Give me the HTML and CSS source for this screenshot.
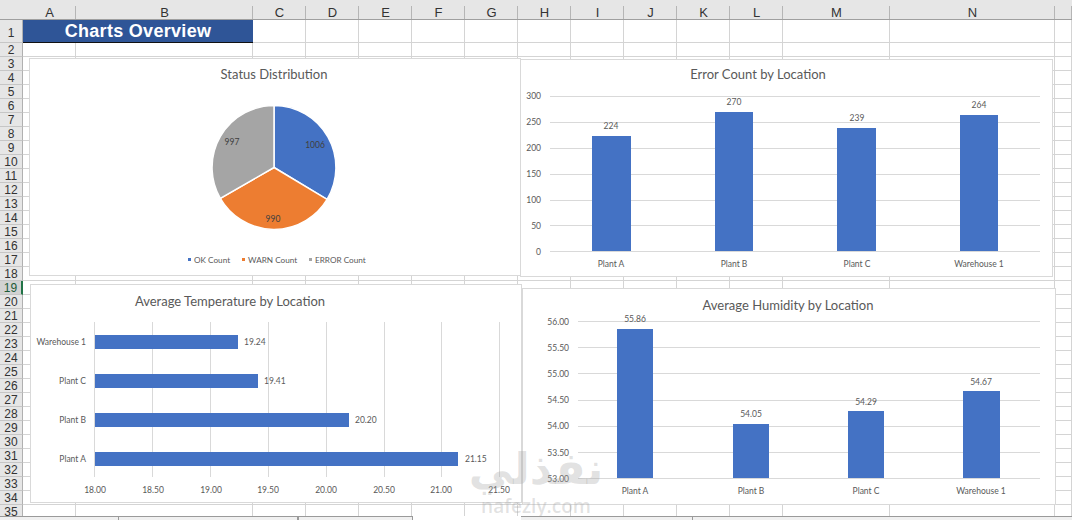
FILE: index.html
```html
<!DOCTYPE html>
<html lang="en">
<head>
    <meta charset="UTF-8">
    <title>Charts Overview</title>
    <link rel="stylesheet" href="styles.css">
</head>
<body>
    <div class="sheet-wrap">
        <div class="sheet" id="sheet"></div>

        <!-- Status Distribution -->
        <div class="chart chart-status">
            <svg viewBox="30 59 490 216" width="490" height="216">
                <text class="title" x="274" y="79">Status Distribution</text>
                <path class="s-blue" d="M274 167.5 V105.5 A62 62 0 0 1 327.1 199.4 Z"/>
                <path class="s-orange" d="M274 167.5 L327.1 199.4 A62 62 0 0 1 220.3 198.4 Z"/>
                <path class="s-grey" d="M274 167.5 L220.3 198.4 A62 62 0 0 1 274 105.5 Z"/>
                <text class="lbl dark" x="315" y="148">1006</text>
                <text class="lbl dark" x="273" y="222">990</text>
                <text class="lbl dark" x="232" y="145">997</text>
                <rect x="188" y="258" width="3" height="3" fill="#4472c4"/>
                <text class="legend" x="194" y="263">OK Count</text>
                <rect x="242" y="258" width="3" height="3" fill="#ed7d31"/>
                <text class="legend" x="248" y="263">WARN Count</text>
                <rect x="309" y="258" width="3" height="3" fill="#a5a5a5"/>
                <text class="legend" x="315" y="263">ERROR Count</text>
            </svg>
        </div>

        <!-- Error Count by Location -->
        <div class="chart chart-errors">
            <svg viewBox="521 60 531 216" width="531" height="216">
                <text class="title" x="758" y="79">Error Count by Location</text>
                <g class="grid">
                    <path d="M550 96.5H1040M550 122.5H1040M550 148.5H1040M550 174.5H1040M550 200.5H1040M550 225.5H1040M550 251.5H1040"/>
                </g>
                <text class="lbl end" x="541" y="99">300</text>
                <text class="lbl end" x="541" y="125">250</text>
                <text class="lbl end" x="541" y="151">200</text>
                <text class="lbl end" x="541" y="177">150</text>
                <text class="lbl end" x="541" y="203">100</text>
                <text class="lbl end" x="541" y="229">50</text>
                <text class="lbl end" x="541" y="255">0</text>
                <rect class="bar" x="592" y="136" width="39" height="115"/>
                <rect class="bar" x="715" y="112" width="38" height="139"/>
                <rect class="bar" x="837" y="128" width="39" height="123"/>
                <rect class="bar" x="960" y="115" width="38" height="136"/>
                <text class="lbl" x="611" y="129">224</text>
                <text class="lbl" x="734" y="105">270</text>
                <text class="lbl" x="857" y="121">239</text>
                <text class="lbl" x="979" y="108">264</text>
                <text class="lbl" x="611" y="267">Plant A</text>
                <text class="lbl" x="734" y="267">Plant B</text>
                <text class="lbl" x="857" y="267">Plant C</text>
                <text class="lbl" x="979" y="267">Warehouse 1</text>
            </svg>
        </div>

        <!-- Average Temperature by Location -->
        <div class="chart chart-temp">
            <svg viewBox="31 285 490 217" width="490" height="217">
                <text class="title" x="230" y="306">Average Temperature by Location</text>
                <g class="grid">
                    <path d="M94.5 322V477M152.5 322V477M210.5 322V477M268.5 322V477M326.5 322V477M384.5 322V477M441.5 322V477M499.5 322V477"/>
                </g>
                <rect class="bar" x="95" y="335" width="143" height="14"/>
                <rect class="bar" x="95" y="374" width="163" height="14"/>
                <rect class="bar" x="95" y="413" width="254" height="14"/>
                <rect class="bar" x="95" y="452" width="363" height="14"/>
                <text class="lbl end" x="86" y="345">Warehouse 1</text>
                <text class="lbl end" x="86" y="384">Plant C</text>
                <text class="lbl end" x="86" y="423">Plant B</text>
                <text class="lbl end" x="86" y="462">Plant A</text>
                <text class="lbl start" x="244" y="345">19.24</text>
                <text class="lbl start" x="264" y="384">19.41</text>
                <text class="lbl start" x="355" y="423">20.20</text>
                <text class="lbl start" x="465" y="462">21.15</text>
                <text class="lbl" x="95" y="493">18.00</text>
                <text class="lbl" x="153" y="493">18.50</text>
                <text class="lbl" x="211" y="493">19.00</text>
                <text class="lbl" x="268" y="493">19.50</text>
                <text class="lbl" x="326" y="493">20.00</text>
                <text class="lbl" x="384" y="493">20.50</text>
                <text class="lbl" x="441" y="493">21.00</text>
                <text class="lbl" x="499" y="493">21.50</text>
            </svg>
        </div>

        <!-- Average Humidity by Location -->
        <div class="chart chart-humidity">
            <svg viewBox="523 289 532 215" width="532" height="215">
                <text class="title" x="788" y="310">Average Humidity by Location</text>
                <g class="grid">
                    <path d="M578 321.5H1040M578 347.5H1040M578 373.5H1040M578 400.5H1040M578 426.5H1040M578 452.5H1040M578 478.5H1040"/>
                </g>
                <text class="lbl end" x="569" y="325">56.00</text>
                <text class="lbl end" x="569" y="351">55.50</text>
                <text class="lbl end" x="569" y="377">55.00</text>
                <text class="lbl end" x="569" y="403">54.50</text>
                <text class="lbl end" x="569" y="429">54.00</text>
                <text class="lbl end" x="569" y="456">53.50</text>
                <text class="lbl end" x="569" y="482">53.00</text>
                <rect class="bar" x="617" y="329" width="36" height="149"/>
                <rect class="bar" x="733" y="424" width="36" height="54"/>
                <rect class="bar" x="848" y="411" width="36" height="67"/>
                <rect class="bar" x="963" y="391" width="37" height="87"/>
                <text class="lbl" x="635" y="322">55.86</text>
                <text class="lbl" x="751" y="417">54.05</text>
                <text class="lbl" x="866" y="405">54.29</text>
                <text class="lbl" x="981" y="385">54.67</text>
                <text class="lbl" x="635" y="494">Plant A</text>
                <text class="lbl" x="751" y="494">Plant B</text>
                <text class="lbl" x="866" y="494">Plant C</text>
                <text class="lbl" x="981" y="494">Warehouse 1</text>
            </svg>
        </div>

        <div class="watermark">
            <div class="wm-ar" dir="rtl">نفذلي</div>
            <div class="wm-en">nafezly.com</div>
        </div>
    </div>

    <div class="tabs">
        <div class="tabs-left">
            <div class="tab tab-a"></div>
            <div class="tab tab-b"></div>
            <div class="tab"></div>
        </div>
        <div class="tabs-right">
            <div class="tab tab-c"></div>
        </div>
    </div>

    <script src="script.js"></script>
</body>
</html>
```
FILE: styles.css
```css
body {
    font-family: "Liberation Sans", Arial, sans-serif;
    margin: 0;
    width: 1072px;
    height: 520px;
    overflow: hidden;
    background-color: #fff;
}

.sheet-wrap {
    position: relative;
    height: 516px;
    overflow: hidden;
}

.sheet {
    display: grid;
    grid-template-columns: 23px 53px 177px 53px 53px 53px 53px 53px 53px 53px 53px 53px 53px 107px 165px 17px;
    grid-template-rows: 20px 23px repeat(34, 14px);
}

.corner,
.col-head {
    background: #e6e6e6;
    border-bottom: 1px solid #9f9f9f;
    box-sizing: border-box;
}

.col-head {
    font-size: 13px;
    line-height: 13px;
    padding-top: 6px;
    text-align: center;
    color: #333;
    position: relative;
}

.col-head::after {
    content: "";
    position: absolute;
    right: 0;
    top: 6px;
    bottom: 0;
    width: 1px;
    background: #b5b5b5;
}

.row-head {
    background: #e6e6e6;
    border-right: 1px solid #b0b0b0;
    border-bottom: 1px solid #c6c6c6;
    box-sizing: border-box;
    font-size: 12px;
    line-height: 14px;
    text-align: center;
    color: #333;
}

.row-head.first {
    line-height: 26px;
}

.row-head.active {
    background: #d2d2d2;
    border-right: 2px solid #217346;
    color: #1e5c38;
}

.cell {
    border-right: 1px solid #d4d4d4;
    border-bottom: 1px solid #d4d4d4;
    box-sizing: border-box;
}

.title-cell {
    grid-column: span 2;
    background: #2f5597;
    border-bottom: 1px solid #111;
    box-sizing: border-box;
    color: #fff;
    font-size: 18px;
    font-weight: bold;
    letter-spacing: 0.3px;
    line-height: 22px;
    text-align: center;
}

.chart {
    position: absolute;
    background: #fff;
    border: 1px solid #d9d9d9;
    overflow: hidden;
}

.chart svg {
    display: block;
}

.chart-status {
    left: 29px;
    top: 58px;
}

.chart-errors {
    left: 520px;
    top: 59px;
}

.chart-temp {
    left: 30px;
    top: 284px;
}

.chart-humidity {
    left: 522px;
    top: 288px;
}

.chart text {
    font-family: Lato, "Open Sans", sans-serif;
    fill: #595959;
    text-anchor: middle;
}

.chart .title {
    font-size: 13px;
}

.chart .lbl {
    font-size: 8.5px;
}

.chart .legend {
    font-size: 8.2px;
    text-anchor: start;
}

.chart .start {
    text-anchor: start;
}

.chart .end {
    text-anchor: end;
}

.chart .dark {
    fill: #404040;
}

.grid path {
    stroke: #d9d9d9;
    stroke-width: 1;
    fill: none;
}

.bar {
    fill: #4472c4;
}

.s-blue,
.s-orange,
.s-grey {
    stroke: #fff;
    stroke-width: 1.5;
}

.s-blue {
    fill: #4472c4;
}

.s-orange {
    fill: #ed7d31;
}

.s-grey {
    fill: #a5a5a5;
}

.watermark {
    position: absolute;
    left: 456px;
    top: 441px;
    width: 160px;
    text-align: center;
    color: rgba(165, 165, 165, 0.32);
    pointer-events: none;
}

.wm-ar {
    font-family: "DejaVu Sans", sans-serif;
    font-size: 44px;
    font-weight: bold;
    line-height: 55px;
}

.wm-en {
    font-family: "Open Sans", sans-serif;
    font-size: 19px;
    font-weight: 600;
    line-height: 20px;
}

.tabs {
    display: flex;
    justify-content: space-between;
    height: 4px;
}

.tabs-left {
    display: flex;
    width: 413px;
    background: #f0f0f0;
    border-top: 1px solid #9a9a9a;
    border-right: 1px solid #9a9a9a;
    box-sizing: border-box;
}

.tab {
    border-right: 1px solid #9a9a9a;
    box-sizing: border-box;
}

.tab-a {
    width: 119px;
}

.tab-b {
    width: 179px;
}

.tab-c {
    width: 172px;
    height: 100%;
}

.tabs-right {
    width: 551px;
    background: #f0f0f0;
    border-top: 1px solid #9a9a9a;
    box-sizing: border-box;
}
```
FILE: script.js
```js
const COLS = ['A', 'B', 'C', 'D', 'E', 'F', 'G', 'H', 'I', 'J', 'K', 'L', 'M', 'N', ''];
const ROWS = 35;
const ACTIVE_ROW = 19;

const sheet = document.getElementById('sheet');

function addDiv(className, text) {
    const el = document.createElement('div');
    el.className = className;
    if (text) el.textContent = text;
    sheet.appendChild(el);
}

addDiv('corner');
COLS.forEach(name => addDiv('col-head', name));

for (let row = 1; row <= ROWS; row++) {
    let headClass = 'row-head';
    if (row === 1) headClass += ' first';
    if (row === ACTIVE_ROW) headClass += ' active';
    addDiv(headClass, String(row));

    if (row === 1) {
        addDiv('title-cell', 'Charts Overview');
        COLS.slice(2).forEach(() => addDiv('cell'));
    } else {
        COLS.forEach(() => addDiv('cell'));
    }
}
```
